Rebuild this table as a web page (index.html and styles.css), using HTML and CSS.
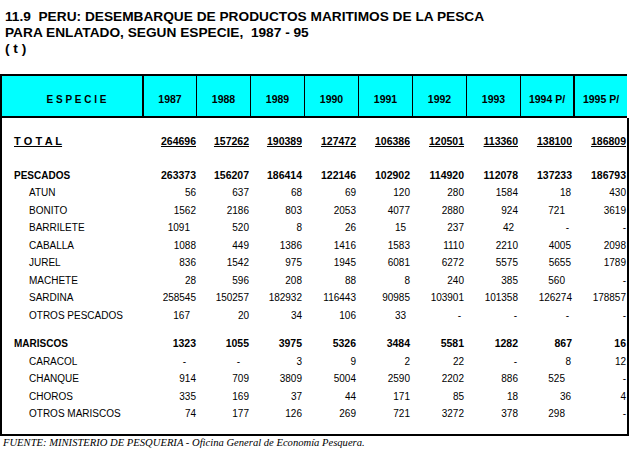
FILE: index.html
```html
<!DOCTYPE html>
<html lang="es">
<head>
<meta charset="utf-8">
<title>11.9 Peru: desembarque de productos maritimos</title>
<link rel="stylesheet" href="styles.css">
</head>
<body>
<div class="title">
  <div>11.9  PERU: DESEMBARQUE DE PRODUCTOS MARITIMOS DE LA PESCA</div>
  <div>PARA ENLATADO, SEGUN ESPECIE,  1987 - 95</div>
  <div>( t )</div>
</div>
<div class="sheet">
  <div class="head">
    <div class="h-especie">E S P E C I E</div>
    <div>1987</div>
    <div>1988</div>
    <div>1989</div>
    <div>1990</div>
    <div>1991</div>
    <div>1992</div>
    <div>1993</div>
    <div class="h-wide">1994 P/</div>
    <div>1995 P/</div>
  </div>
  <div class="body">
    <div class="row total">
      <span>T O T A L</span><span>264696</span><span>157262</span><span>190389</span><span>127472</span><span>106386</span><span>120501</span><span>113360</span><span>138100</span><span>186809</span>
    </div>
    <div class="row grp first">
      <span>PESCADOS</span><span>263373</span><span>156207</span><span>186414</span><span>122146</span><span>102902</span><span>114920</span><span>112078</span><span>137233</span><span>186793</span>
    </div>
    <div class="row">
      <span>ATUN</span><span>56</span><span>637</span><span>68</span><span>69</span><span>120</span><span>280</span><span>1584</span><span class="s1">18</span><span>430</span>
    </div>
    <div class="row">
      <span>BONITO</span><span>1562</span><span>2186</span><span>803</span><span>2053</span><span>4077</span><span>2880</span><span>924</span><span class="s6">721</span><span>3619</span>
    </div>
    <div class="row">
      <span>BARRILETE</span><span class="s4">1091</span><span>520</span><span>8</span><span>26</span><span class="s4">15</span><span>237</span><span class="s4">42</span><span class="s3">-</span><span>-</span>
    </div>
    <div class="row">
      <span>CABALLA</span><span>1088</span><span>449</span><span>1386</span><span>1416</span><span>1583</span><span>1110</span><span>2210</span><span class="s1">4005</span><span>2098</span>
    </div>
    <div class="row">
      <span>JUREL</span><span>836</span><span>1542</span><span>975</span><span>1945</span><span>6081</span><span>6272</span><span>5575</span><span class="s1">5655</span><span>1789</span>
    </div>
    <div class="row">
      <span>MACHETE</span><span>28</span><span>596</span><span>208</span><span>88</span><span>8</span><span>240</span><span>385</span><span class="s6">560</span><span>-</span>
    </div>
    <div class="row">
      <span>SARDINA</span><span>258545</span><span>150257</span><span>182932</span><span>116443</span><span>90985</span><span>103901</span><span>101358</span><span>126274</span><span>178857</span>
    </div>
    <div class="row">
      <span>OTROS PESCADOS</span><span class="s4">167</span><span>20</span><span>34</span><span>106</span><span class="s4">33</span><span class="s3">-</span><span class="s1">-</span><span class="s3">-</span><span>-</span>
    </div>
    <div class="row grp second">
      <span>MARISCOS</span><span>1323</span><span>1055</span><span>3975</span><span>5326</span><span>3484</span><span>5581</span><span>1282</span><span>867</span><span>16</span>
    </div>
    <div class="row">
      <span>CARACOL</span><span class="s9">-</span><span class="s9">-</span><span>3</span><span>9</span><span>2</span><span>22</span><span class="s1">-</span><span class="s1">8</span><span>12</span>
    </div>
    <div class="row">
      <span>CHANQUE</span><span>914</span><span>709</span><span>3809</span><span>5004</span><span>2590</span><span>2202</span><span>886</span><span class="s6">525</span><span>-</span>
    </div>
    <div class="row">
      <span>CHOROS</span><span>335</span><span>169</span><span>37</span><span>44</span><span>171</span><span>85</span><span>18</span><span class="s1">36</span><span>4</span>
    </div>
    <div class="row">
      <span>OTROS MARISCOS</span><span>74</span><span>177</span><span>126</span><span>269</span><span>721</span><span>3272</span><span>378</span><span class="s6">298</span><span>-</span>
    </div>
  </div>
</div>
<div class="foot">FUENTE: MINISTERIO DE PESQUERIA - Oficina General de Economía Pesquera.</div>
</body>
</html>
```

FILE: styles.css
```css
* {
  box-sizing: border-box;
}

html, body {
  margin: 0;
  padding: 0;
  background: #ffffff;
}

body {
  width: 629px;
  font-family: "Liberation Sans", Arial, sans-serif;
  color: #000000;
}

.title {
  padding: 9px 0 0 5px;
  font-size: 13.7px;
  font-weight: bold;
  line-height: 16px;
}

.title > div {
  white-space: pre;
}

.sheet {
  margin-top: 17px;
}

.head {
  display: grid;
  grid-template-columns: 142px 53px repeat(7, 54px) 52px;
  width: 627px;
  height: 44px;
  border-top: 2px solid #000;
  border-left: 2px solid #000;
  border-bottom: 2px solid #000;
  background: #00ffff;
}

.head > div {
  display: flex;
  align-items: center;
  justify-content: center;
  padding-top: 6px;
  border-right: 1px solid #000;
  font-size: 10.5px;
  font-weight: bold;
  white-space: nowrap;
}

.head > .h-especie {
  border-right-width: 2px;
  font-size: 10px;
  padding-left: 9px;
}

.head > .h-wide {
  border-right-width: 2px;
}

.head > div:last-child {
  border-right: 0;
}

.body {
  width: 629px;
  height: 318px;
  padding-top: 15px;
  border-left: 2px solid #000;
  border-right: 2px solid #000;
  border-bottom: 2px solid #000;
}

.row {
  display: grid;
  grid-template-columns: 142px 53px repeat(7, 54px) 52px;
  height: 17.5px;
  line-height: 17.5px;
  font-size: 10px;
}

.row > span {
  text-align: right;
  padding-right: 3px;
  white-space: nowrap;
}

.row > span:first-child {
  text-align: left;
  padding-left: 27px;
}

.row > span:nth-child(2) {
  padding-right: 1px;
}

.row > span:nth-child(3) {
  padding-right: 2px;
}

.row > span:nth-child(10) {
  padding-right: 1px;
}

.row > span.s1 { padding-right: 4px; }
.row > span.s3 { padding-right: 6px; }
.row > span.s4 { padding-right: 7px; }
.row > span.s6 { padding-right: 10px; }
.row > span.s9 { padding-right: 11px; }

.grp,
.total {
  font-weight: bold;
}

.grp > span,
.total > span {
  font-size: 10.5px;
}

.grp > span:first-child {
  padding-left: 12px;
  font-size: 10px;
}

.total > span {
  text-decoration: underline;
}

.total > span:first-child {
  padding-left: 12px;
  font-size: 11px;
}

.grp.first {
  margin-top: 16px;
}

.grp.second {
  margin-top: 11px;
}

.foot {
  padding-left: 3px;
  font-family: "Liberation Serif", "Times New Roman", serif;
  font-style: italic;
  font-size: 10.6px;
  line-height: 13px;
  white-space: nowrap;
}
```
